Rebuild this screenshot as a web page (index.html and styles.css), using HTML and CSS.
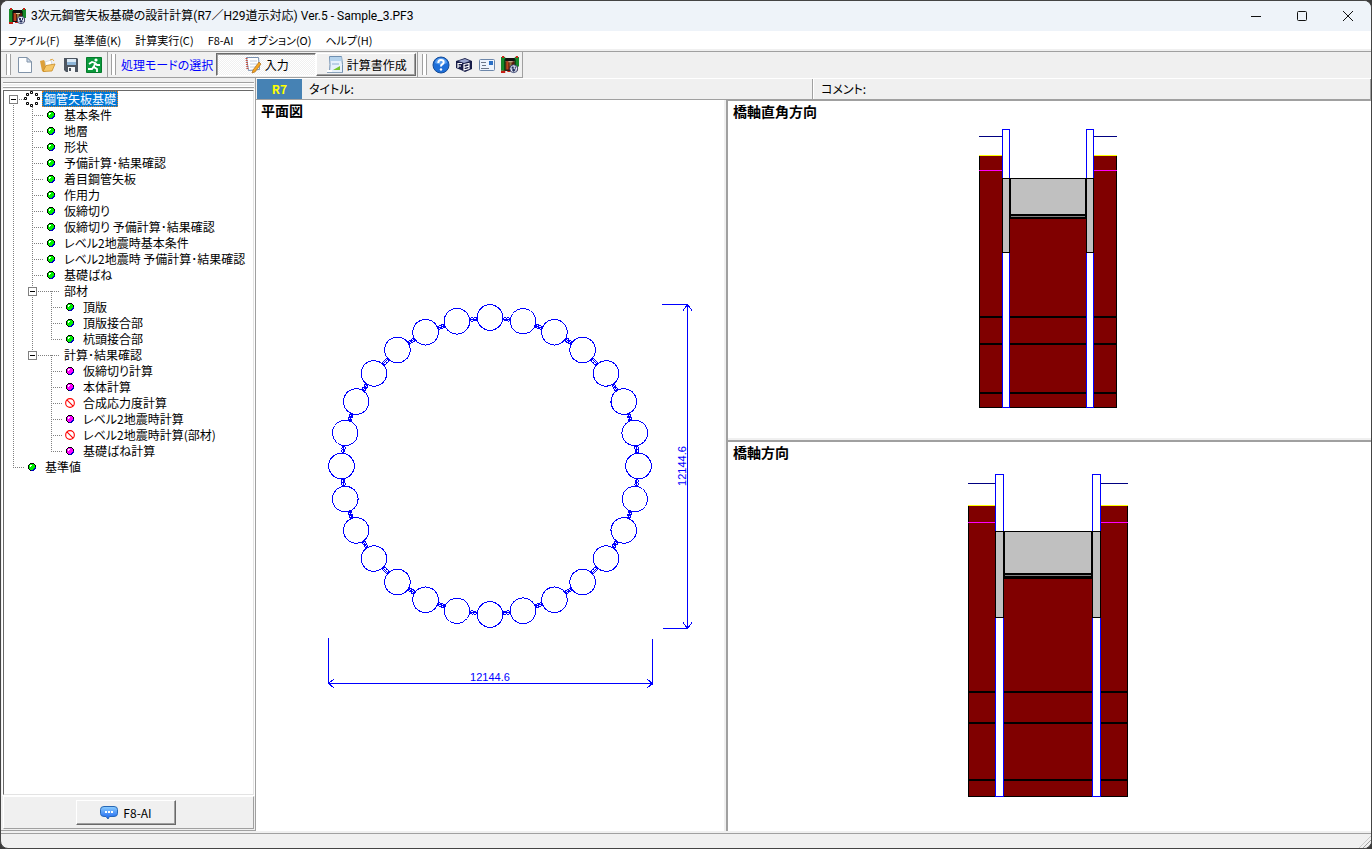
FILE: index.html
```html
<!DOCTYPE html>
<html lang="ja">
<head>
<meta charset="utf-8">
<title>3次元鋼管矢板基礎の設計計算</title>
<link rel="stylesheet" href="styles.css">
</head>
<body>
<svg class="defs" aria-hidden="true">
  <defs>
    <symbol id="app" viewBox="0 0 17 17">
      <path fill="#101010" d="M1 2h15v3H1z"/><path fill="#5d1a12" d="M2 5h14v9H2z"/>
      <path fill="#b5461c" d="M5 5h2v8H5z"/><path fill="#8a7a3a" d="M8 6h2v4H8z"/><path fill="#d9c9a0" d="M7 5h4v1H7z"/>
      <path fill="#168a2a" d="M0 1h4v13H0zM13 1h4v9h-4z"/><path fill="#0a3d12" d="M3 3h1v11H3zM13 3h1v6h-1z"/>
      <path fill="#c81e14" d="M1 0h2v2H1zM14 0h2v2h-2zM0 14h4v2H0zM6 14h3v1H6z"/>
      <path fill="#111" d="M4 3h9v1H4zM4 13h5v1H4z"/>
      <circle cx="12" cy="12" r="3.700" fill="#e8eef8" stroke="#26305e" stroke-width=".8"/>
      <path fill="#26305e" d="M10 10h2v2h-2zM13 10h1v2h-1zM10 13l2-1 2 1-2 2z"/>
    </symbol>
    <symbol id="dot-green" viewBox="0 0 8 8">
      <path fill="#000" d="M2 0h4v1h1v1h1v4H7v1H6v1H2V7H1V6H0V2h1V1h1z"/>
      <path fill="#0000c0" d="M7 4h1v2H7v1H6v1H3V7h2V6h1V5h1z"/>
      <path fill="#00f000" d="M2 1h4v1h1v3H6v1H5v1H2V6H1V2h1z"/><path fill="#fff" d="M2 2h2v1H3v1H2z"/>
    </symbol>
    <symbol id="dot-pink" viewBox="0 0 8 8">
      <path fill="#000" d="M2 0h4v1h1v1h1v4H7v1H6v1H2V7H1V6H0V2h1V1h1z"/>
      <path fill="#0000c0" d="M7 4h1v2H7v1H6v1H3V7h2V6h1V5h1z"/>
      <path fill="#f0f" d="M2 1h4v1h1v3H6v1H5v1H2V6H1V2h1z"/><path fill="#fff" d="M2 2h2v1H3v1H2z"/>
    </symbol>
    <symbol id="ban" viewBox="0 0 9 9">
      <circle cx="4.500" cy="4.500" r="3.900" fill="#fff" stroke="#f00"/><path stroke="#f00" d="M1.700 1.700l5.600 5.600"/>
    </symbol>
    <g id="joint">
      <circle cx="-1.500" cy="-147.500" r="1.800"/><circle cx="1.500" cy="-147.500" r="1.800"/><path d="M-4-147.500h8"/>
    </g>
    <g id="pile">
      <circle cy="-148.500" r="12.800"/>
      <use href="#joint" transform="rotate(6.429)"/>
    </g>
    <g id="quarter">
      <use href="#pile"/>
      <use href="#pile" transform="rotate(12.857)"/>
      <use href="#pile" transform="rotate(25.714)"/>
      <use href="#pile" transform="rotate(38.571)"/>
      <use href="#pile" transform="rotate(51.429)"/>
      <use href="#pile" transform="rotate(64.286)"/>
      <use href="#pile" transform="rotate(77.143)"/>
    </g>
  </defs>
</svg>

<div class="window">
  <header class="titlebar">
    <svg class="app-icon"><use href="#app"/></svg>
    <h1>3次元鋼管矢板基礎の設計計算(R7／H29道示対応) Ver.5 - Sample_3.PF3</h1>
    <div class="window-buttons">
      <button type="button" aria-label="最小化"><svg viewBox="0 0 12 12"><path d="M1 6.500h10"/></svg></button>
      <button type="button" aria-label="最大化"><svg viewBox="0 0 12 12"><rect x="1.500" y="1.500" width="9" height="9" rx="1"/></svg></button>
      <button type="button" aria-label="閉じる"><svg viewBox="0 0 12 12"><path d="M1 1l10 10M11 1L1 11"/></svg></button>
    </div>
  </header>

  <nav class="menubar">
    <button type="button">ファイル(F)</button>
    <button type="button">基準値(K)</button>
    <button type="button">計算実行(C)</button>
    <button type="button">F8-AI</button>
    <button type="button">オプション(O)</button>
    <button type="button">ヘルプ(H)</button>
  </nav>

  <div class="toolbar">
    <div class="band files">
      <i class="grip"></i>
      <button type="button" aria-label="新規"><svg viewBox="0 0 18 18"><path fill="#fdfeff" stroke="#8193a8" d="M2.500 1.500h8.500l4.500 4.500v10.500h-13z"/><path fill="#cfdcec" stroke="#8193a8" d="M11 1.500V6h4.500z"/></svg></button>
      <button type="button" aria-label="開く"><svg viewBox="0 0 18 18"><path fill="#dda03a" d="M1 5l4-1 1 2h6v3l-6 7-3-1z"/><path fill="#fff" stroke="#bcc6d0" stroke-width=".6" d="M6 6l6-2 1 5-6 2z"/><path fill="#f6c768" stroke="#c98b25" stroke-width=".8" d="M4 15.500l3-6 9-1.500-3 7z"/><path fill="none" stroke="#e2a63e" d="M11 4q3-2 4 1"/></svg></button>
      <button type="button" aria-label="保存"><svg viewBox="0 0 18 18"><path fill="#4d5560" d="M2 2h13l1 1v13H4l-2-2z"/><path fill="#dce9f5" d="M5 3h9v6H5z"/><path fill="#8fb6d8" d="M5 6h9v3H5z"/><path fill="#f4f5f6" d="M6 11h7v5H6z"/><path fill="#4d5560" d="M7 12h2v3H7z"/></svg></button>
      <button type="button" aria-label="終了"><svg viewBox="0 0 18 18"><path fill="#0b9a3c" stroke="#067a2c" d="M1.500 1.500h15v15h-15z"/><circle cx="11" cy="4" r="1.600" fill="#fff"/><path fill="none" stroke="#fff" stroke-width="1.800" d="M4 8l3-2 3 1-1 4 3 2v3M9 10l-2 3H3M10 7l2 2h3"/></svg></button>
    </div>
    <div class="band modes">
      <i class="grip"></i>
      <span class="mode-label">処理モードの選択</span>
      <button type="button" class="mode pressed" aria-pressed="true"><svg viewBox="0 0 18 18"><path fill="#fff" stroke="#7890b0" d="M2.500 1.500h12l1 12-11 1z"/><path stroke="#c95040" stroke-dasharray="1 1" stroke-width="2" d="M2.500 2l1 12"/><path stroke="#c2cede" d="M6 5h7M6 8h7M6 11h6"/><path fill="#f5a623" stroke="#a06010" stroke-width=".6" d="M15 6l2 2-6 8-3 1 1-3z"/></svg>入力</button>
      <button type="button" class="mode" aria-pressed="false"><svg viewBox="0 0 18 18"><path fill="#e7f1fb" stroke="#6f8fb0" d="M3.500.5h12q1.500 8 1 16h-13q1-8 0-16z"/><path fill="#b5d3ec" d="M4 1h11.500v4H4z"/><path stroke="#8db0cf" d="M6 8h7"/><path fill="#76c52c" d="M7 14l7-4v4z"/><path fill="#fff" d="M1 14h5v3H1z"/><path stroke="#8aa2ba" d="M1 16.500h15"/></svg>計算書作成</button>
    </div>
    <div class="band help">
      <i class="grip"></i>
      <button type="button" aria-label="ヘルプ"><svg viewBox="0 0 18 18"><circle cx="9" cy="9" r="8" fill="#1f6fd8" stroke="#174b94"/><path fill="#5a9ff0" d="M3 7a6 5 0 0 1 12 0q-6 3-12 0z"/><path fill="none" stroke="#fff" stroke-width="2" d="M6.300 7q0-3 2.700-3t2.700 2.300q0 1.400-1.700 2.200-1 .5-1 2"/><circle cx="9" cy="13.500" r="1.200" fill="#fff"/></svg></button>
      <button type="button" aria-label="F8"><svg viewBox="0 0 18 18"><path fill="#171c48" d="M1 5l9-3 7 3v8l-7 3-4-2-5-2z"/><path fill="#9ba6ce" d="M3 5l7-2 5 2-6 2z"/><path fill="none" stroke="#fff" stroke-width="1.200" d="M3 12V7.500h4M3 10h3"/><path fill="none" stroke="#fff" stroke-width="1.200" d="M9 8.500l5-1v2.500l-5 1.500zM9 11.500v2.500l5-1.500V10"/></svg></button>
      <button type="button" aria-label="メール"><svg viewBox="0 0 18 18"><rect x="1.500" y="3.500" width="15" height="11" rx="1" fill="#edf4fc" stroke="#6d87aa"/><path fill="#2a6fc5" d="M11 5h4v4h-4z"/><path stroke="#6c7788" d="M3 6.500h5M4 9.500h4M3 12.500h8"/></svg></button>
      <button type="button" aria-label="バージョン情報"><svg viewBox="0 0 17 17"><use href="#app"/></svg></button>
    </div>
  </div>

  <main class="main">
    <aside class="sidebar">
      <i class="dock-grip"></i>
      <ul class="tree">
        <li class="open">
          <div class="row"><button type="button" class="toggle" aria-label="折りたたむ"></button>
            <svg class="icon root" viewBox="0 0 16 16"><g fill="#fff" stroke="#000"><path d="M6.500.5h2v2h-2zM11.500 2.500h2v2h-2zM13.500 6.500h2v2h-2zM11.500 11.500h2v2h-2zM6.500 13.500h2v2h-2zM2.500 11.500h2v2h-2zM.5 6.500h2v2h-2zM2.500 2.500h2v2h-2z"/></g></svg>
            <a href="#" class="selected">鋼管矢板基礎</a></div>
          <ul>
            <li><div class="row"><svg class="icon"><use href="#dot-green"/></svg><a href="#">基本条件</a></div></li>
            <li><div class="row"><svg class="icon"><use href="#dot-green"/></svg><a href="#">地層</a></div></li>
            <li><div class="row"><svg class="icon"><use href="#dot-green"/></svg><a href="#">形状</a></div></li>
            <li><div class="row"><svg class="icon"><use href="#dot-green"/></svg><a href="#">予備計算･結果確認</a></div></li>
            <li><div class="row"><svg class="icon"><use href="#dot-green"/></svg><a href="#">着目鋼管矢板</a></div></li>
            <li><div class="row"><svg class="icon"><use href="#dot-green"/></svg><a href="#">作用力</a></div></li>
            <li><div class="row"><svg class="icon"><use href="#dot-green"/></svg><a href="#">仮締切り</a></div></li>
            <li><div class="row"><svg class="icon"><use href="#dot-green"/></svg><a href="#">仮締切り 予備計算･結果確認</a></div></li>
            <li><div class="row"><svg class="icon"><use href="#dot-green"/></svg><a href="#">レベル2地震時基本条件</a></div></li>
            <li><div class="row"><svg class="icon"><use href="#dot-green"/></svg><a href="#">レベル2地震時 予備計算･結果確認</a></div></li>
            <li><div class="row"><svg class="icon"><use href="#dot-green"/></svg><a href="#">基礎ばね</a></div></li>
            <li class="open group">
              <div class="row"><button type="button" class="toggle" aria-label="折りたたむ"></button><a href="#">部材</a></div>
              <ul>
                <li><div class="row"><svg class="icon"><use href="#dot-green"/></svg><a href="#">頂版</a></div></li>
                <li><div class="row"><svg class="icon"><use href="#dot-green"/></svg><a href="#">頂版接合部</a></div></li>
                <li><div class="row"><svg class="icon"><use href="#dot-green"/></svg><a href="#">杭頭接合部</a></div></li>
              </ul>
            </li>
            <li class="open group">
              <div class="row"><button type="button" class="toggle" aria-label="折りたたむ"></button><a href="#">計算･結果確認</a></div>
              <ul>
                <li><div class="row"><svg class="icon"><use href="#dot-pink"/></svg><a href="#">仮締切り計算</a></div></li>
                <li><div class="row"><svg class="icon"><use href="#dot-pink"/></svg><a href="#">本体計算</a></div></li>
                <li><div class="row"><svg class="icon ban"><use href="#ban"/></svg><a href="#">合成応力度計算</a></div></li>
                <li><div class="row"><svg class="icon"><use href="#dot-pink"/></svg><a href="#">レベル2地震時計算</a></div></li>
                <li><div class="row"><svg class="icon ban"><use href="#ban"/></svg><a href="#">レベル2地震時計算(部材)</a></div></li>
                <li><div class="row"><svg class="icon"><use href="#dot-pink"/></svg><a href="#">基礎ばね計算</a></div></li>
              </ul>
            </li>
          </ul>
        </li>
        <li><div class="row"><svg class="icon"><use href="#dot-green"/></svg><a href="#">基準値</a></div></li>
      </ul>
      <div class="ai-panel">
        <button type="button" class="ai-button"><svg viewBox="0 0 18 14"><defs><linearGradient id="bubble" x2="0" y2="1"><stop stop-color="#8fd0ff"/><stop offset="1" stop-color="#1560f0"/></linearGradient></defs><path fill="url(#bubble)" stroke="#2767b5" d="M4 .5h10q3.500 0 3.500 3v4q0 3-3.500 3H9.500L8 13l-2-2.500H4q-3.500 0-3.500-3v-4q0-3 3.500-3z"/><path fill="#fff" d="M5 5h2v2H5zM8 5h2v2H8zM11 5h2v2h-2z"/></svg>F8-AI</button>
      </div>
    </aside>

    <section class="workspace">
      <div class="info">
        <strong class="badge">R7</strong>
        <span class="field">タイトル:</span>
        <span class="field comment">コメント:</span>
      </div>
      <div class="panes">
        <section class="pane plan">
          <h2>平面図</h2>
          <svg viewBox="256 100 468 731" role="img" aria-label="平面図">
            <g transform="translate(490 466)" fill="none" stroke="#00f" shape-rendering="crispEdges">
              <use href="#quarter"/>
              <use href="#quarter" transform="rotate(90)"/>
              <use href="#quarter" transform="rotate(180)"/>
              <use href="#quarter" transform="rotate(270)"/>
            </g>
            <g fill="none" stroke="#00f" shape-rendering="crispEdges">
              <path d="M662 304.500h26M663 628.500h25M687.500 304v325M683 310.500l4.500-6 4.500 6M683 622.500l4.500 6 4.500-6"/>
              <path d="M328.500 638v46M652.500 639v46M328 683.500h325M334 679l-5.500 4.500 5.500 4.500M647 679l5.500 4.500-5.500 4.500"/>
            </g>
            <text class="dim" x="490" y="681">12144.6</text>
            <text class="dim" transform="translate(686 466) rotate(-90)">12144.6</text>
          </svg>
        </section>
        <i class="splitter vertical"></i>
        <div class="sections">
          <section class="pane first">
            <h2>橋軸直角方向</h2>
            <svg viewBox="728 101 643 337" role="img" aria-label="橋軸直角方向" shape-rendering="crispEdges">
              <path fill="maroon" d="M979 156h23v252h-23zM1094 156h23v252h-23zM1010 218h76v190h-76z"/>
              <path fill="#ff0" d="M979 155h23v1h-23zM1094 155h23v1h-23z"/>
              <path fill="navy" d="M979 136h23v1h-23zM1094 136h23v1h-23z"/>
              <path d="M979 156h1v252h-1zM1116 156h1v252h-1zM979 316h138v2H979zM979 343h138v2H979zM979 392h138v2H979zM979 407h138v1H979z"/>
              <path fill="#f0f" d="M979 170h23v1h-23zM1094 170h23v1h-23z"/>
              <path fill="#fff" stroke="#00f" d="M1002.500 129.500h7v278h-7zM1086.500 129.500h7v278h-7z"/>
              <path fill="silver" stroke="#000" d="M1002.500 178.500h7v74h-7zM1086.500 178.500h7v74h-7z"/>
              <path d="M1009 178h78v41h-78z"/><path fill="silver" d="M1011 179h74v35h-74z"/><path fill="gray" d="M1011 216h74v1h-74z"/>
            </svg>
          </section>
          <i class="splitter horizontal"></i>
          <section class="pane">
            <h2>橋軸方向</h2>
            <svg viewBox="728 442 643 389" role="img" aria-label="橋軸方向" shape-rendering="crispEdges">
              <path fill="maroon" d="M968 506h27v291h-27zM1101 506h27v291h-27zM1004 578h88v219h-88z"/>
              <path fill="#ff0" d="M968 505h27v1h-27zM1101 505h27v1h-27z"/>
              <path fill="navy" d="M968 483h27v1h-27zM1101 483h27v1h-27z"/>
              <path d="M968 506h1v291h-1zM1127 506h1v291h-1zM968 691h160v2H968zM968 722h160v2H968zM968 779h160v2H968zM968 796h160v1H968z"/>
              <path fill="#f0f" d="M968 522h27v1h-27zM1101 522h27v1h-27z"/>
              <path fill="#fff" stroke="#00f" d="M995.500 474.500h8v322h-8zM1092.500 474.500h8v322h-8z"/>
              <path fill="silver" stroke="#000" d="M995.500 531.500h8v86h-8zM1092.500 531.500h8v86h-8z"/>
              <path d="M1003 531h90v48h-90z"/><path fill="silver" d="M1005 532h86v41h-86z"/><path fill="gray" d="M1005 575h86v1h-86z"/>
            </svg>
          </section>
        </div>
      </div>
    </section>
  </main>
  <footer class="statusbar"><i></i></footer>
</div>
</body>
</html>
```

FILE: styles.css
```css
* { box-sizing: border-box; }

body {
  margin: 0;
  background: #3c3c3c;
  color: #000;
  font: 12px/16px "Noto Sans CJK JP", sans-serif;
  font-feature-settings: "palt";
}

button {
  margin: 0;
  padding: 0;
  border: 0;
  background: none;
  color: inherit;
  font: inherit;
  font-feature-settings: inherit;
}

svg { display: block; flex: none; }
.defs { position: absolute; width: 0; height: 0; }

.window {
  display: flex;
  flex-direction: column;
  height: 100vh;
  overflow: hidden;
  border: 1px solid #444;
  border-radius: 8px;
  background: #f0f0f0;
}

/* Title bar and menu */
.titlebar {
  display: flex;
  flex: none;
  align-items: center;
  height: 30px;
  padding-left: 8px;
  background: #eef3f9;
}
.app-icon { width: 17px; height: 17px; }
.titlebar h1 {
  flex: 1;
  margin: 0 0 0 5px;
  font-family: Roboto, "Noto Sans CJK JP", sans-serif;
  font-size: 12px;
  font-weight: 400;
}
.window-buttons { display: flex; }
.window-buttons button {
  display: grid;
  place-items: center;
  width: 46px;
  height: 30px;
}
.window-buttons svg {
  width: 12px;
  height: 12px;
  fill: none;
  stroke: #111;
}
.menubar {
  display: flex;
  flex: none;
  gap: 14px;
  height: 20px;
  padding-left: 7px;
  border-bottom: 2px solid #f0f0f0;
  background: #fff;
  font-size: 11px;
}

/* Toolbar */
.toolbar {
  display: flex;
  flex: none;
  height: 27px;
  border-top: 1px solid #a0a0a0;
}
.band {
  display: flex;
  align-items: center;
  border-right: 1px solid #a0a0a0;
  border-bottom: 1px solid #a0a0a0;
}
.band svg { width: 18px; height: 18px; }
.grip {
  width: 5px;
  height: 21px;
  border: solid #a0a0a0;
  border-width: 0 1px;
  background: #fff;
}
.files { gap: 5px; padding: 0 4px 0 5px; }
.modes { padding: 0 1px 0 3px; }
.mode-label { margin: 0 3px 0 5px; color: #00f; }
.mode {
  display: flex;
  align-items: center;
  justify-content: center;
  gap: 3px;
  width: 100px;
  height: 23px;
  border: 1px solid;
  border-color: #fff #696969 #696969 #fff;
  box-shadow: inset -1px -1px #a0a0a0;
}
.mode.pressed {
  border-color: #696969 #fff #fff #696969;
  background: repeating-conic-gradient(#fff 0 25%, #f0f0f0 0 50%) 0 0 / 2px 2px;
  box-shadow: inset 1px 1px #a0a0a0;
}
.help { gap: 5px; padding: 0 3px 0 4px; }

/* Sidebar */
.main { display: flex; flex: 1; min-height: 0; }
.sidebar {
  display: flex;
  flex: none;
  flex-direction: column;
  width: 255px;
  padding: 4px 1px 1px 2px;
  border-right: 1px solid #a0a0a0;
  border-bottom: 1px solid #a0a0a0;
}
.dock-grip {
  height: 6px;
  margin-bottom: 2px;
  border: solid #a0a0a0;
  border-width: 1px 0;
  background: linear-gradient(#fff 0 1px, #f0f0f0 1px 3px, #fff 3px);
}
.tree {
  flex: 1;
  min-height: 0;
  border: 1px solid;
  border-color: #696969 #e3e3e3 #e3e3e3 #696969;
  outline: 1px solid #fff;
  background: #fff;
}
.tree, .tree ul { margin: 0; padding: 0; list-style: none; }
.tree ul { margin-left: 19px; }
.tree li { position: relative; }
.tree li::before, .tree li::after {
  content: "";
  position: absolute;
  left: 9px;
}
.tree li::before {
  top: 0;
  bottom: 0;
  width: 1px;
  background: repeating-linear-gradient(#808080 0 1px, transparent 1px 2px);
}
.tree > li:first-child::before { top: 8px; }
.tree .group > ul > li:first-child::before { top: -8px; }
.tree li:last-child::before { bottom: auto; height: 8px; }
.tree li::after {
  top: 8px;
  width: 12px;
  height: 1px;
  background: repeating-linear-gradient(90deg, #808080 0 1px, transparent 1px 2px);
}
.tree .group::after { width: 28px; }
.row {
  display: flex;
  align-items: center;
  height: 16px;
  padding-left: 19px;
}
.icon { width: 8px; height: 8px; margin: 0 7px 0 5px; }
.icon.ban { width: 10px; height: 10px; margin: 0 6px 0 4px; }
.icon.root { width: 16px; height: 16px; margin: 0 2px 0 1px; }
.row a {
  padding: 0 2px;
  color: #000;
  line-height: 16px;
  text-decoration: none;
  white-space: nowrap;
}
.row .selected {
  outline: 1px dotted #e08020;
  outline-offset: -1px;
  background: #0078d7;
  color: #fff;
}
.toggle {
  z-index: 1;
  flex: none;
  width: 9px;
  height: 9px;
  margin: 0 5px 0 -14px;
  border: 1px solid #808080;
  background: linear-gradient(#000, #000) center / 5px 1px no-repeat #fff;
}
.group > .row > .toggle { margin-right: 25px; }
.ai-panel {
  display: grid;
  flex: none;
  place-items: center;
  height: 33px;
  margin-top: 1px;
  padding-right: 5px;
  border: 1px solid;
  border-color: #fff #a0a0a0 #a0a0a0 #fff;
}
.ai-button {
  display: flex;
  align-items: center;
  justify-content: center;
  gap: 5px;
  width: 100px;
  height: 25px;
  border: 1px solid;
  border-color: #fff #696969 #696969 #fff;
  box-shadow: inset -1px -1px #a0a0a0;
}
.ai-button svg { width: 18px; height: 14px; }

/* Drawing area */
.workspace {
  display: flex;
  flex: 1;
  flex-direction: column;
  min-width: 0;
}
.info {
  display: grid;
  flex: none;
  grid-template-columns: 45px 511fr 558fr;
  height: 22px;
  padding-left: 1px;
  border-top: 1px solid #fff;
  border-bottom: 1px solid #a0a0a0;
  line-height: 20px;
}
.badge {
  background: #4682b4;
  color: #ff0;
  text-align: center;
}
.field { padding-left: 7px; border-right: 1px solid #a0a0a0; }
.comment { border-left: 1px solid #fff; }
.panes {
  display: grid;
  flex: 1;
  grid-template-columns: 468fr 4px 643fr;
  min-height: 0;
}
.sections {
  display: grid;
  grid-template-rows: 338fr 4px 389fr;
  min-width: 0;
  min-height: 0;
}
.pane {
  display: grid;
  min-width: 0;
  min-height: 0;
  background: #fff;
}
.pane.first { border-top: 1px solid #a0a0a0; }
.pane h2, .pane > svg { grid-area: 1 / 1; }
.pane h2 {
  margin: 1px 5px;
  font-size: 14px;
  font-weight: 700;
  line-height: 18px;
}
.pane > svg { width: 100%; height: 100%; min-height: 0; }
.splitter.vertical { border-right: 2px solid #a0a0a0; }
.splitter.horizontal { border-bottom: 2px solid #a0a0a0; }
.dim {
  fill: #00f;
  font: 11px "Liberation Sans", sans-serif;
  text-anchor: middle;
}

.statusbar {
  display: flex;
  flex: none;
  align-items: flex-end;
  justify-content: flex-end;
  height: 15px;
  margin-top: 2px;
  border-top: 1px solid #a0a0a0;
}
.statusbar i {
  width: 12px;
  height: 12px;
  background: repeating-linear-gradient(135deg, #f0f0f0 0 2px, #a0a0a0 2px 3px);
  clip-path: polygon(100% 0, 100% 100%, 0 100%);
}
```
